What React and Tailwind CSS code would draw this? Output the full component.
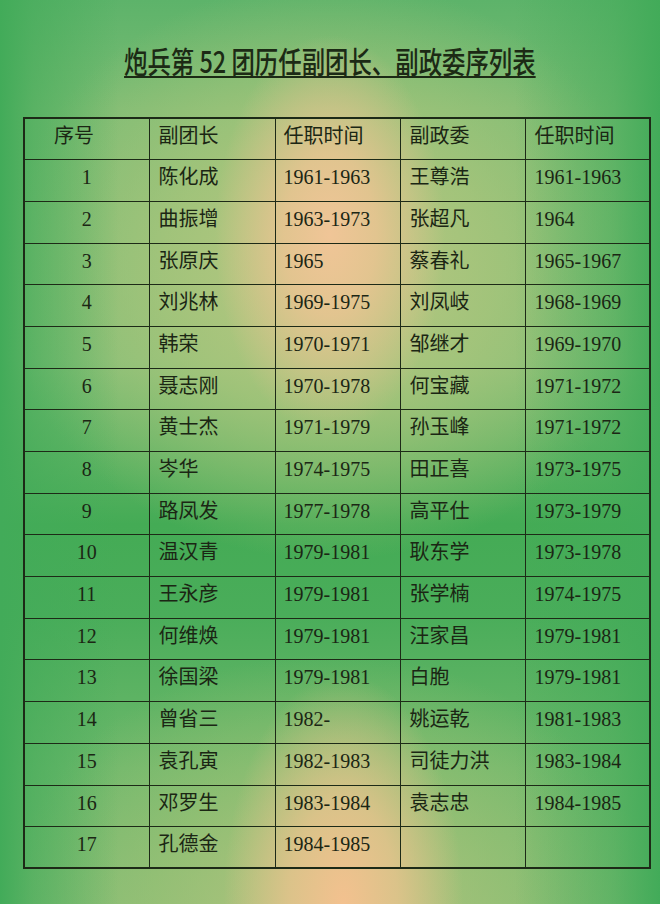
import React from "react";

const rows = [
  ["1", "陈化成", "1961-1963", "王尊浩", "1961-1963"],
  ["2", "曲振增", "1963-1973", "张超凡", "1964"],
  ["3", "张原庆", "1965", "蔡春礼", "1965-1967"],
  ["4", "刘兆林", "1969-1975", "刘凤岐", "1968-1969"],
  ["5", "韩荣", "1970-1971", "邹继才", "1969-1970"],
  ["6", "聂志刚", "1970-1978", "何宝藏", "1971-1972"],
  ["7", "黄士杰", "1971-1979", "孙玉峰", "1971-1972"],
  ["8", "岑华", "1974-1975", "田正喜", "1973-1975"],
  ["9", "路凤发", "1977-1978", "高平仕", "1973-1979"],
  ["10", "温汉青", "1979-1981", "耿东学", "1973-1978"],
  ["11", "王永彦", "1979-1981", "张学楠", "1974-1975"],
  ["12", "何维焕", "1979-1981", "汪家昌", "1979-1981"],
  ["13", "徐国梁", "1979-1981", "白胞", "1979-1981"],
  ["14", "曾省三", "1982-", "姚运乾", "1981-1983"],
  ["15", "袁孔寅", "1982-1983", "司徒力洪", "1983-1984"],
  ["16", "邓罗生", "1983-1984", "袁志忠", "1984-1985"],
  ["17", "孔德金", "1984-1985", "", ""],
];

const cell =
  "border-[1.5px] border-[#1d2a17] align-top pt-[3px] leading-[28px] whitespace-nowrap";

export default function App() {
  return (
    <div
      className="w-[660px] h-[904px] overflow-hidden flex flex-col text-[#1b2614] bg-[linear-gradient(to_right,rgba(66,171,89,1)_0%,rgba(66,171,89,0.6)_5%,rgba(66,171,89,0)_18%,rgba(66,171,89,0)_78%,rgba(66,171,89,0.55)_93%,rgba(66,171,89,1)_100%),radial-gradient(ellipse_115px_200px_at_50%_235px,#f0c597_0%,rgba(234,196,146,0.85)_40%,rgba(234,196,146,0)_100%),radial-gradient(ellipse_330px_290px_at_50%_270px,rgba(192,200,132,0.95)_0%,rgba(176,198,125,0.7)_50%,rgba(160,195,120,0)_100%),radial-gradient(ellipse_120px_230px_at_52%_904px,#f3c18f_0%,rgba(228,195,140,0.85)_45%,rgba(228,195,140,0)_100%),radial-gradient(ellipse_320px_250px_at_50%_904px,rgba(186,196,128,0.9)_0%,rgba(170,195,120,0.5)_55%,rgba(170,195,120,0)_100%),linear-gradient(to_bottom,#5db36a_0%,#7bbc73_12%,#80be75_40%,#44ab55_58%,#4aad5a_68%,#6db86b_85%,#7fbc73_100%)]"
      style={{ fontFamily: '"Liberation Serif", "Noto Sans CJK SC", serif' }}
    >
      <div className="h-[117px] flex justify-center pt-[40px]">
        <div
          className="text-[30px] leading-[40px] font-medium underline decoration-2 underline-offset-[3px] scale-x-[0.78] whitespace-nowrap text-[#1c2a15]"
          style={{ fontFamily: '"Noto Sans CJK SC", sans-serif' }}
        >
          炮兵第 52 团历任副团长、副政委序列表
        </div>
      </div>
      <table className="ml-[23px] w-[626px] table-fixed border-collapse border-2 border-[#1d2a17] text-[20px]">
        <colgroup>
          <col className="w-[125px]" />
          <col className="w-[126px]" />
          <col className="w-[125px]" />
          <col className="w-[125px]" />
          <col className="w-[125px]" />
        </colgroup>
        <tbody>
          <tr className="h-[41.7px]">
            <td className={`${cell} pl-[29px]`}>序号</td>
            <td className={`${cell} pl-[9px]`}>副团长</td>
            <td className={`${cell} pl-[8px]`}>任职时间</td>
            <td className={`${cell} pl-[9px]`}>副政委</td>
            <td className={`${cell} pl-[9px]`}>任职时间</td>
          </tr>
          {rows.map((r) => (
            <tr key={r[0]} className="h-[41.7px]">
              <td className={`${cell} text-center`}>{r[0]}</td>
              <td className={`${cell} pl-[9px]`}>{r[1]}</td>
              <td className={`${cell} pl-[8px]`}>{r[2]}</td>
              <td className={`${cell} pl-[9px]`}>{r[3]}</td>
              <td className={`${cell} pl-[9px]`}>{r[4]}</td>
            </tr>
          ))}
        </tbody>
      </table>
    </div>
  );
}
